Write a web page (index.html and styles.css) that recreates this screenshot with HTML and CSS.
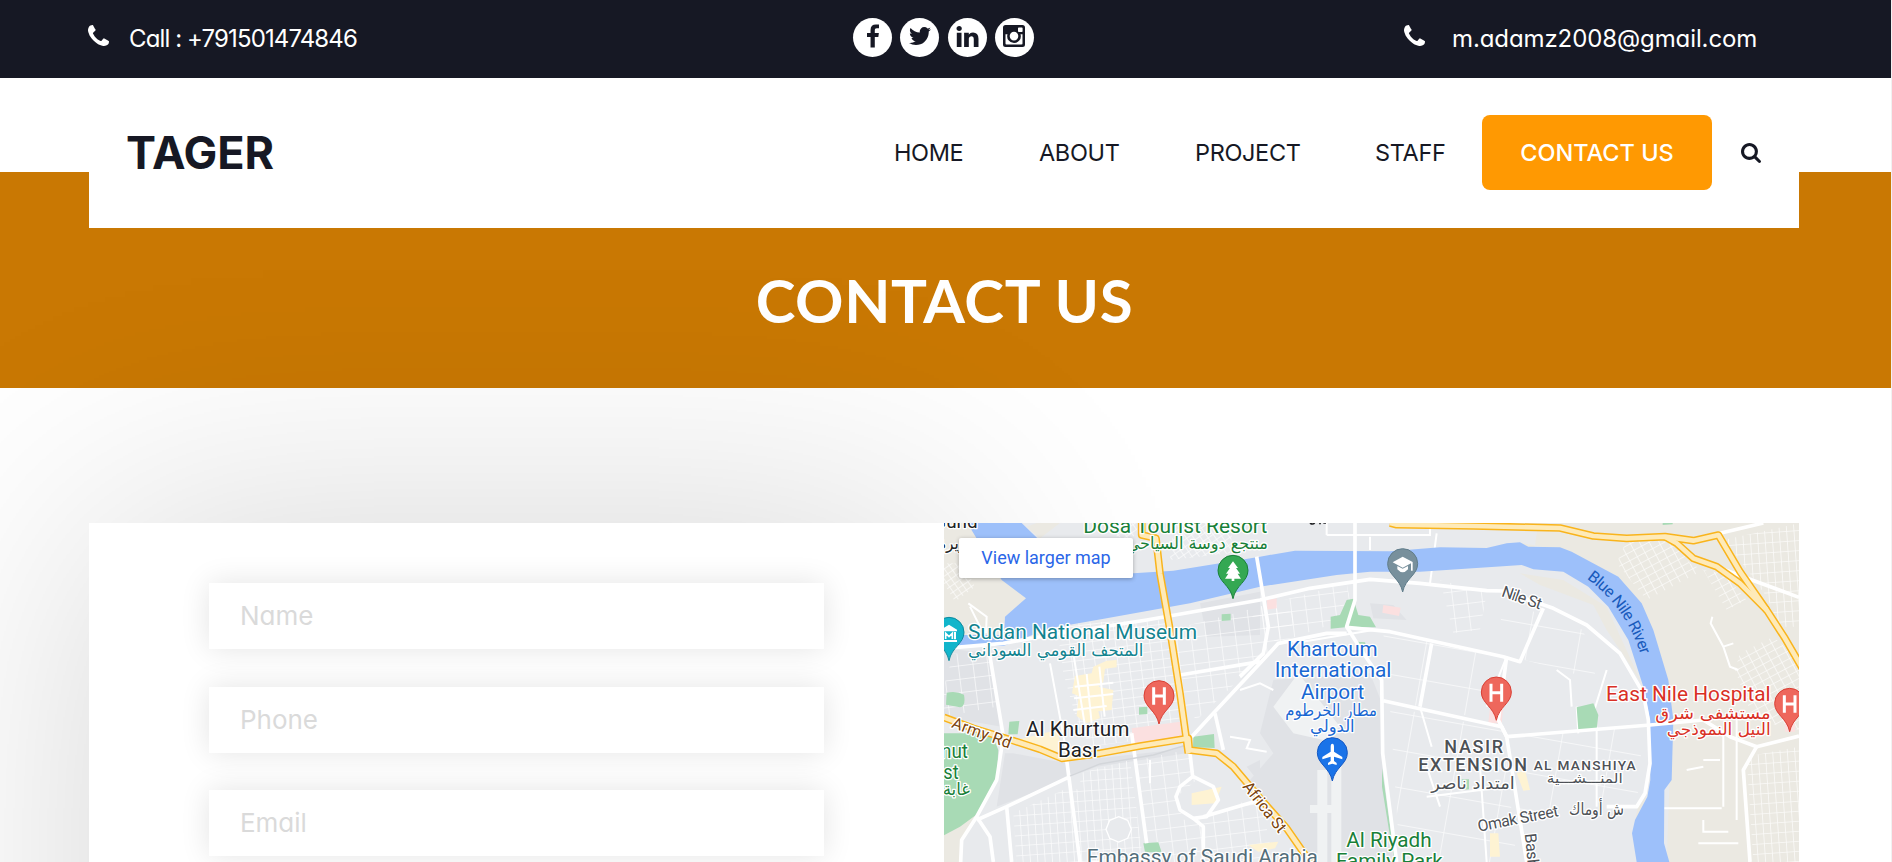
FILE: index.html
```
<!DOCTYPE html>
<html lang="en">
<head>
<meta charset="utf-8">
<title>Tager - Contact us</title>
<link rel="stylesheet" href="styles.css">
</head>
<body>
<svg class="defs" aria-hidden="true">
  <symbol id="phone" viewBox="0 128 1408 1408"><path d="M1408 1240q0 27-10 70.5t-21 68.5q-21 50-122 106-94 51-186 51-27 0-53-3.5t-57-12.5-47-14.5-55.5-20.5-49.5-18q-98-35-175-83-127-79-264-216t-216-264q-48-77-83-175-3-9-18-49.500t-20.500-55.500-14.500-47-12.500-57-3.500-53q0-92 51-186 56-101 106-122 25-11 68.500-21t70.500-10q14 0 21 3 18 6 53 76 11 19 30 54t35 63.500 31 53.500q3 4 17.500 25t21.500 35.500 7 28.500q0 20-28.500 50t-62 55-62 53-28.500 46q0 9 5 22.500t8.500 20.500 14 24 11.500 19q76 137 174 235t235 174q2 1 19 11.500t24 14 20.500 8.500 22.500 5q18 0 46-28.500t53-62 55-62 50-28.500q14 0 28.500 7t35.500 21.500 25 17.500q25 15 53.500 31t63.500 35 54 30q70 35 76 53 3 7 3 21z"/></symbol>
</svg>

<div class="topbar">
  <a class="contact call"><svg class="ico"><use href="#phone"/></svg><span class="t-call">Call : +791501474846</span></a>
  <div class="social">
    <a class="dot"><svg class="fb" viewBox="95 0 864 1664"><path d="M959 12v264h-157q-86 0-116 36t-30 108v189h293l-39 296h-254v759h-306v-759h-255v-296h255v-218q0-186 104-288.500t277-102.500q147 0 228 12z"/></svg></a>
    <a class="dot"><svg class="tw" viewBox="44 256 1576 1280"><path d="M1620 408q-67 98-162 167 1 14 1 42 0 130-38 259.500t-115.500 248.500-184.500 210.500-258 146-323 54.500q-271 0-496-145 35 4 78 4 225 0 401-138-105-2-188-64.500t-114-159.500q33 5 61 5 43 0 85-11-112-23-185.500-111.500t-73.500-205.500v-4q68 38 146 41-66-44-105-115t-39-154q0-88 44-163 121 149 294.500 238.500t371.500 99.500q-8-38-8-74 0-134 94.500-228.500t228.500-94.500q140 0 236 102 109-21 205-78-37 115-142 178 93-10 186-50z"/></svg></a>
    <a class="dot"><svg class="li" viewBox="0 148 1536 1468"><path d="M349 625v991h-330v-991h330zM370 319q1 73-50.500 122t-135.500 49h-2q-82 0-132-49t-50-122q0-74 51.500-122.500t134.500-48.500 133 48.500 51 122.500zM1536 1048v568h-329v-530q0-105-40.500-164.500t-126.500-59.500q-63 0-105.500 34.500t-63.500 85.500q-11 30-11 81v553h-329q2-399 2-647t-1-296l-1-48h329v144h-2q20-32 41-56t56.500-52 87-43.500 114.500-15.500q171 0 275 113.500t104 332.500z"/></svg></a>
    <a class="dot"><svg class="ig" viewBox="0 0 22 22"><path fill-rule="evenodd" d="M2.500 0h17A2.500 2.500 0 0 1 22 2.500v17a2.500 2.500 0 0 1-2.500 2.500h-17A2.500 2.500 0 0 1 0 19.500v-17A2.500 2.500 0 0 1 2.500 0zM15.800 2.500a.8.8 0 0 0-.8.8v3c0 .5.300.8.800.8h3a.8.8 0 0 0 .8-.8v-3a.8.800 0 0 0-.8-.8zM2.500 9.300v9.300c0 .5.400.9.900.9h15.200c.5 0 .9-.4.900-.9V9.300h-2a6.800 6.800 0 1 1-13 0zM11 6.800a4.300 4.300 0 1 0 0 8.600 4.300 4.300 0 0 0 0-8.600z"/></svg></a>
  </div>
  <a class="contact mail"><svg class="ico"><use href="#phone"/></svg><span class="t-mail">m.adamz2008@gmail.com</span></a>
</div>

<header class="header">
  <a class="brand">TAGER</a>
  <nav class="nav">
    <a class="link home">HOME</a>
    <a class="link about">ABOUT</a>
    <a class="link project">PROJECT</a>
    <a class="link staff">STAFF</a>
    <a class="button">CONTACT US</a>
    <svg class="search" viewBox="0 128 1664 1664"><path d="M1152 832q0-185-131.500-316.500t-316.500-131.500-316.500 131.500-131.500 316.500 131.500 316.500 316.500 131.500 316.500-131.500 131.500-316.500zM1664 1664q0 52-38 90t-90 38q-54 0-90-38l-343-342q-179 124-399 124-143 0-273.500-55.500t-225-150-150-225-55.500-273.500 55.500-273.500 150-225 225-150 273.500-55.500 273.500 55.500 225 150 150 225 55.500 273.500q0 220-124 399l343 343q37 37 37 90z"/></svg>
  </nav>
</header>

<section class="banner"><h1 class="title">CONTACT US</h1></section>

<section class="contact-area">
  <form class="form">
    <input class="field" type="text" placeholder="Name">
    <input class="field" type="text" placeholder="Phone">
    <input class="field" type="text" placeholder="Email">
  </form>
  <div class="map">
    <svg class="map-art" viewBox="12 9 2565 1017">
      <defs>
        <pattern id="g1" width="34" height="26" patternUnits="userSpaceOnUse" patternTransform="rotate(-7)"><path d="M0 0H34M0 0V26" class="street"/></pattern>
        <pattern id="g2" width="44" height="40" patternUnits="userSpaceOnUse" patternTransform="rotate(-7)"><path d="M0 0H44M0 0V40" class="street"/></pattern>
        <pattern id="g3" width="22" height="30" patternUnits="userSpaceOnUse" patternTransform="rotate(-4)"><path d="M0 0H22M0 0V30" class="street"/></pattern>
        <pattern id="g4" width="26" height="22" patternUnits="userSpaceOnUse" patternTransform="rotate(-28)"><path d="M0 0H26M0 0V22" class="street"/></pattern>
        <pattern id="g5" width="18" height="18" patternUnits="userSpaceOnUse" patternTransform="rotate(55)"><path d="M0 0H18M0 0V18" class="street"/></pattern>
        <pattern id="g6" width="150" height="110" patternUnits="userSpaceOnUse" patternTransform="rotate(10)"><path d="M0 0H150M0 0V110" class="street"/></pattern>
        <path id="pin" d="M0-130a45 45 0 0 1 45 45c0 34-37 44-45 85c-8-41-45-51-45-85a45 45 0 0 1 45-45z"/>
      </defs>
      <rect class="urban" x="0" y="0" width="2600" height="1030"/>
      <path class="urban2" d="M12 385L150 400L185 620L12 590zM780 250L960 215V345L800 350zM220 700L380 730 380 780 170 860 195 700zM380 725L700 690 740 670 740 700 470 740 390 770zM1000 480L1130 470 1290 460 1330 560 1330 700 1360 1026 1110 1026 930 780 1000 700 960 640zM920 740L960 720V790zM1290 250L1360 255 1400 300 1300 295z"/>
      <path class="apron" d="M1000 560L1075 460 1200 620 1150 660 1060 640zM1132 750h30v276h-30zM1174 690h30v336h-30zM1110 855h90v24h-90z"/>
      <path class="tan" d="M12 9H120L300 130 258 235 195 290 190 376H12zM290 9H360L300 55 260 20zM12 940L110 880 60 980 62 1026H12zM1795 9H2577V1026H2180L2195 600 2140 330 2035 170 1890 95 1740 68 1780 110zM1740 160L1870 180 2000 260 2110 500 2060 420 2000 330 1960 255 1800 195zM2122 828L2085 905 2076 960 2095 850z"/>
      <path class="hatch" fill="url(#g5)" d="M12 130L70 130 105 200 45 245 12 190zM520 9H600L575 60 530 50zM700 9L880 9 870 100 690 120z"/>
      <path class="hatch" fill="url(#g1)" d="M350 310L690 300 735 640 450 680 410 600 370 460z"/>
      <path class="hatch" fill="url(#g2)" d="M40 400L150 410 170 560 12 590 12 500zM690 330L1000 250 1080 290 980 400 770 600 735 560z"/>
      <path class="hatch" fill="url(#g3)" d="M220 880L390 800 520 850 560 1026 230 1026zM420 760L570 720 610 1026 430 1026z"/>
      <path class="hatch" fill="url(#g2)" d="M590 720L740 690 770 780 710 830 730 900 860 870 960 820 1000 1026 630 1026z"/>
      <path class="hatch" fill="url(#g2)" d="M920 270L1220 190 1240 290 1010 370zM1500 180L1640 220 1620 330 1540 340z"/>
      <path class="hatch" fill="url(#g6)" d="M1330 330L1700 420 1650 600 1340 540zM1350 560L1690 630 1730 1026 1380 1026zM1730 650L2110 620 2090 860 1740 880zM1660 230L1930 330 1970 480 1720 410z"/>
      <path class="hatch" fill="url(#g4)" d="M2060 60L2200 65 2250 130 2290 150 2120 240 2030 130zM2290 150L2350 160 2420 240 2360 270zM2400 400L2500 350 2577 420 2577 630 2440 600 2385 450z"/>
      <path class="hatch" fill="url(#g3)" d="M2350 60L2577 10 2577 320 2520 320 2480 230 2400 120zM2420 710L2577 680 2577 1026 2440 1026z"/>
      <path class="street2" d="M2317 290L2312 310 2350 380 2370 440 2395 450M2350 380l30-10M2350 640V860M2290 720h50M2165 865h180M2290 900v35h75M2275 970h120M2240 750l50-10M2390 600V900M85 250L140 290 138 340M140 360L90 260M1060 370L1300 330M900 510L960 490 1000 510M1470 190l20-150M1160 45h310v-25M1160 45V9M1290 50v40M1460 740L1500 860M2000 450l-40 130M1700 410L1640 560M1850 450L1890 480 1895 560M1910 560L1915 640M1970 620V860M1620 740L1640 1026M1460 830L1700 800M870 650l60 10-10 25 60 10M630 720V790"/>
      <path class="river" d="M82 9H245L300 62 345 150 580 160 700 152 960 110 1065 92 1350 94 1500 82 1640 84 1700 70 1740 67 1765 80 1860 82 1895 95 2035 170 2105 250 2140 330 2185 480 2200 600 2195 780 2173 810 2172 970 2188 1026H2090L2076 940 2085 900 2122 830 2131 780 2130 600 2110 500 2065 360 2005 260 1945 200 1870 155 1780 148 1745 135 1440 155 1290 155 1190 165 960 200 750 250 500 295 330 325 190 378H12V345H192L195 290 258 235 185 180z"/>
      <path class="park" d="M12 640L155 640 175 690 170 780 115 880 60 920 12 946zM20 518q30-6 52 6 6 36-12 38l-42-8zM208 605l30-2-5 40-28 0zM597 562l25-2v22l-25 2zM845 283l27-2v20l-27 2zM760 650l62-8 2 42-65-2zM610 970l45-3 10 30-50 0zM1172 290L1200 285 1220 240 1240 236 1255 285 1290 290 1308 322 1230 320 1172 326zM1250 365l25 2 5 15-25 0zM1326 745L1365 1026 1355 980 1326 800zM1910 562l50-12 15 35-5 42-55 3zM1565 778h22v30l-22 2zM2168 9h30v4l-30 2z"/>
      <path class="beach" d="M405 468l50-8 5-20 40-18 30-2v22l-35 4-5 40-15 14 45 10-5 60-40 4 5 20-40 16-30-22 6-60-20-8zM230 660L350 630 370 700zM755 820l90-20-20 50-70 5zM1730 760l25-10 15 60-20 2zM1650 940h25l5 70-30 0zM925 975l90-10-10 20-50 10z"/>
      <path class="rose" d="M575 625L720 605 725 648 580 675zM980 240l30-5v30l-28 4zM1330 255l52 8-5 25-50-10zM1650 560h40l-5 50-40 0zM2535 610h30v25h-30z"/>
      <path class="street2" d="M404 500L520 488M402 535L520 522M400 570L500 558M440 462L455 610M478 440L494 590"/>
      <g class="major">
        <path d="M12 385L190 370 330 345 620 300 960 240 1110 205 1290 178 1440 190 1640 212 1690 213L1840 265 1940 315 2040 400 2110 520 2125 600 2130 730 2115 820 2090 860 2000 860"/>
        <path d="M1245 9V240L1220 320 1270 400 1325 480 1328 700 1370 1026"/>
        <path d="M1220 322L1350 335 1690 410 1740 425 1810 265"/>
        <path d="M1220 340L1160 340 1015 370 960 430 820 580 755 650"/>
        <path d="M1330 542L1685 620 1700 650 2130 615 2290 600 2370 650 2450 680 2577 648"/>
        <path d="M2450 680L2410 750 2430 1026M1700 410L1675 600 1700 650 1760 1026M1475 370L1440 560"/>
        <path d="M150 410L190 650 170 780 110 890 65 960 62 1026M110 890L150 950 160 1026M110 900L200 860 390 770M380 720L420 1026M200 860L215 1026M575 640L620 970"/>
        <path d="M750 700L758 770 720 800 708 830 720 870 760 895 800 890 835 840 820 800 760 770M760 895L790 920 790 1026M790 890L960 840M720 465L960 425M825 580L850 690"/>
        <path d="M2330 140L2450 185 2577 232M2340 40L2470 9M950 110L985 320 970 400 900 470"/>
      </g>
      <path class="street2" d="M330 430L380 700M400 400L440 650M1440 560L1475 680"/>
      <path d="M390 768L480 732 640 705 740 675" fill="none" stroke="#d3d6da" stroke-width="4"/>
      <path d="M536 890l27 11 11 27-11 27-27 11-27-11-11-27 11-27z" class="ring"/>
      <g class="case"><path d="M605 9L605 45 648 55 660 160 690 330 720 520 745 700"/><path d="M12 592L100 625 220 662 300 688 365 715 480 700 600 678 745 655 748 690 830 700 880 740 960 835 1040 925 1110 1026"/><path d="M1350 9L1370 14 1600 18 1860 24 1960 48 2060 55 2175 50 2260 62 2335 45 2400 155 2480 270 2535 355 2590 450"/><path d="M2175 50L2210 70 2260 115 2330 140 2400 190 2480 270"/></g>
      <g class="fill"><path d="M605 0L605 45 648 55 660 160 690 330 720 520 745 700"/><path d="M0 588L100 625 220 662 300 688 365 715 480 700 600 678 745 655 748 690 830 700 880 740 960 835 1040 925 1120 1040"/><path d="M1350 9L1370 14 1600 18 1860 24 1960 48 2060 55 2175 50 2260 62 2335 45 2400 155 2480 270 2535 355 2590 450"/><path d="M2175 50L2210 70 2260 115 2330 140 2400 190 2480 270"/></g>

      <use href="#pin" x="27" y="422" fill="#12b5cb" stroke="#0e8a9e" stroke-width="3"/>
      <path class="w" d="M27 314l24 15v5H3v-5zM6 336h6v22H6zM42 336h6v22h-6zM2 360h49v6H2z"/><path d="M17 357v-17l10 10 10-10v17" fill="none" stroke="#fff" stroke-width="5"/>
      <use href="#pin" x="879" y="236" fill="#34a853" stroke="#188038" stroke-width="3"/>
      <path class="w" d="M879 124l15 20h-6l12 17h-7l10 15h-20v7h-8v-7h-20l10-15h-7l12-17h-6z"/>
      <use href="#pin" x="1388" y="216" fill="#78909c" stroke="#607d8b" stroke-width="3"/>
      <path class="w" d="M1388 110l30 16v26h-5v-22l-25 13-30-16zM1372 138l16 8 16-8v10q-8 9-16 9t-16-9z"/>
      <g fill="#ee675c" stroke="#d93f34" stroke-width="3"><use href="#pin" x="657" y="612"/><use href="#pin" x="1669" y="601"/><use href="#pin" x="2549" y="635"/></g>
      <path d="M641 502v52M673 502v52M641 528h32M1653 491v54M1685 491v54M1653 518h32M2533 526v52M2565 526v52M2533 552h32" stroke="#fff" stroke-width="9" fill="none"/>
      <use href="#pin" x="1177" y="783" fill="#1a73e8" stroke="#1559c4" stroke-width="3"/>
      <path class="w" d="M1177 671q5 0 5 9v15l25 16v7l-25-8v13l8 6v6l-13-4-13 4v-6l8-6v-13l-25 8v-7l25-16v-15q0-9 5-9z"/>

      <g class="label">
        <text x="-20" y="23" textLength="133" lengthAdjust="spacingAndGlyphs">Gund</text><text x="-6" y="88" class="ar" textLength="85" lengthAdjust="spacingAndGlyphs">زيرة</text>
        <g class="green"><text x="430" y="38" textLength="552" lengthAdjust="spacingAndGlyphs">Dosa Tourist Resort</text><text x="560" y="88" class="ar" textLength="424" lengthAdjust="spacingAndGlyphs">منتجع دوسة السياحي</text>
          <text x="3" y="713" textLength="81" lengthAdjust="spacingAndGlyphs">nut</text><text x="10" y="777" textLength="46" lengthAdjust="spacingAndGlyphs">st</text><text x="8" y="824" class="ar" textLength="82" lengthAdjust="spacingAndGlyphs">غابة</text>
          <text x="1219" y="982" textLength="256" lengthAdjust="spacingAndGlyphs">Al Riyadh</text><text x="1188" y="1045" textLength="320" lengthAdjust="spacingAndGlyphs">Family Park</text></g>
        <g class="teal"><text x="84" y="357" textLength="687" lengthAdjust="spacingAndGlyphs">Sudan National Museum</text><text x="84" y="407" class="ar" textLength="526" lengthAdjust="spacingAndGlyphs">المتحف القومي السوداني</text></g>
        <text x="258" y="648" textLength="310" lengthAdjust="spacingAndGlyphs">Al Khurtum</text><text x="354" y="711" textLength="124" lengthAdjust="spacingAndGlyphs">Basr</text>
        <g class="blue"><text x="1041" y="409" textLength="272" lengthAdjust="spacingAndGlyphs">Khartoum</text><text x="1004" y="472" textLength="350" lengthAdjust="spacingAndGlyphs">International</text><text x="1083" y="536" textLength="190" lengthAdjust="spacingAndGlyphs">Airport</text><text x="1036" y="587" class="ar" textLength="275" lengthAdjust="spacingAndGlyphs">مطار الخرطوم</text><text x="1110" y="637" class="ar" textLength="134" lengthAdjust="spacingAndGlyphs">الدولي</text></g>
        <g class="red"><text x="1998" y="543" textLength="494" lengthAdjust="spacingAndGlyphs">East Nile Hospital</text><text x="2146" y="596" class="ar" textLength="346" lengthAdjust="spacingAndGlyphs">مستشفى شرق</text><text x="2180" y="644" class="ar" textLength="312" lengthAdjust="spacingAndGlyphs">النيل النموذجي</text></g>
        <g class="gray"><text x="1513" y="699" class="mid" textLength="176">NASIR</text><text x="1435" y="753" class="mid" textLength="326">EXTENSION</text><text x="1474" y="807" class="ar" textLength="250" lengthAdjust="spacingAndGlyphs">امتداد ناصر</text><text x="1781" y="749" class="sm" textLength="306">AL MANSHIYA</text><text x="1820" y="790" class="ar3" textLength="228" lengthAdjust="spacingAndGlyphs">المنـــشـــية</text>
          <text x="1887" y="885" class="ar" textLength="165" lengthAdjust="spacingAndGlyphs">ش أوماك</text><text class="road" transform="translate(1616 935) rotate(-11)" textLength="246">Omak Street</text><text class="road" transform="translate(1682 228) rotate(19)" textLength="124">Nile St</text><text class="road" transform="translate(1754 942) rotate(84)" textLength="130">Bashir</text></g>
        <text x="440" y="1031" class="slate" textLength="694" lengthAdjust="spacingAndGlyphs">Embassy of Saudi Arabia</text>
        <g class="brown"><text class="road" transform="translate(32 622) rotate(20)" textLength="186">Army Rd</text><text class="road" transform="translate(906 800) rotate(52)" textLength="180">Africa St</text></g>
        <path id="nile" class="guide" d="M1940 176Q2060 262 2104 412"/><text class="road plain"><textPath href="#nile" textLength="285">Blue Nile River</textPath></text>
        <path d="M1110 9q8 6 14 0M1140 9v4M1150 9h8" stroke="#202124" stroke-width="5" fill="none"/>
      </g>
    </svg>
    <a class="larger">View larger map</a>
  </div>
</section>
</body>
</html>
```
FILE: styles.css
```
* { box-sizing: border-box; }
html { height: 862px; overflow: hidden; background: #f1f1f1; }
body { margin: 0; width: 1891px; height: 862px; overflow: hidden; background: #fff; color: #161824; font-family: Inter, "Open Sans", sans-serif; font-feature-settings: "cv11"; }
.defs { position: absolute; width: 0; height: 0; }

.topbar { height: 78px; padding: 0 134px 3px 88px; background: #161824; color: #fff; display: flex; justify-content: space-between; align-items: center; font-size: 24px; }
.contact { display: flex; align-items: center; white-space: nowrap; width: 353px; }
.call { width: 765px; }
.ico { width: 21px; height: 21px; flex: none; fill: #fff; margin-top: -4px; }
.t-call { margin: 1px 0 0 20px; letter-spacing: -0.88px; }
.t-mail { margin: 1px 0 0 27px; letter-spacing: -0.1px; }
.social { display: flex; gap: 8.3px; margin-right: auto; }
.dot { width: 39px; height: 39px; border-radius: 50%; background: #fff; fill: #161824; display: flex; align-items: center; justify-content: center; padding-bottom: 3px; }
.fb { width: 12px; height: 24px; }
.tw { width: 22px; height: 18px; }
.li { width: 23px; height: 21px; }
.ig { width: 22px; height: 22px; }

.header { position: relative; z-index: 2; width: 1710px; height: 150px; margin-left: 89px; padding: 0 38px 2px 37px; background: #fff; display: flex; align-items: center; justify-content: space-between; }
.brand { font-size: 45px; font-weight: 700; letter-spacing: -0.1px; }
.nav { display: flex; align-items: center; font-size: 23.5px; letter-spacing: -0.35px; white-space: nowrap; }
.home { width: 145px; }
.about { width: 156px; }
.project { width: 180px; }
.staff { width: 107px; }
.button { width: 230px; height: 75px; border-radius: 8px; background: #ff9902; color: #fff; font-weight: 500; letter-spacing: 0; display: flex; align-items: center; justify-content: center; }
.search { width: 20px; height: 20px; margin: 2px 0 0 29px; fill: #161824; }

.banner { height: 216px; margin-top: -56px; padding-top: 56px; background: #c97803; display: flex; align-items: center; justify-content: center; }
.title { margin: 0 0 16px -2px; color: #fff; font: 700 60px/72px Lato, sans-serif; letter-spacing: 0.6px; }

.contact-area { height: 474px; padding: 135px 92px 0 89px; display: grid; grid-template-columns: 855px 855px; }
.form { height: 760px; padding: 60px 120px; background: #fff; box-shadow: 0 0 250px rgba(0, 0, 0, 0.165); display: flex; flex-direction: column; gap: 37.6px; }
.field { width: 615px; height: 66px; flex: none; padding: 0 31px 1px; border: 0; background: #fff; box-shadow: 0 0 30px rgba(0, 0, 0, 0.11); font: inherit; font-size: 26px; letter-spacing: -0.05px; }
.field::placeholder { color: #dadada; }
.map { position: relative; z-index: 1; height: 339px; overflow: hidden; }
.map-art { display: block; width: 855px; height: 339px; }
.larger { position: absolute; left: 15px; top: 15px; width: 174px; height: 40px; border-radius: 2px; background: #fff; box-shadow: 0 1px 4px rgba(0, 0, 0, 0.3); color: #2a66e8; font: 18px/39px Roboto, sans-serif; text-align: center; }

.urban { fill: #e8eaed; }
.urban2 { fill: #e0e2e6; }
.apron { fill: #f0f2f3; }
.tan { fill: #ebe9e2; }
.river { fill: #9dc0fa; }
.park { fill: #a8dab5; }
.beach { fill: #fef3d3; }
.rose { fill: #fbe0e0; }
.street { fill: none; stroke: #fff; stroke-width: 4.5; }
.hatch { opacity: 0.8; }
.street2 { fill: none; stroke: #fff; stroke-width: 6; }
.major { fill: none; stroke: #fff; stroke-width: 11; stroke-linejoin: round; }
.ring { fill: #e8eaed; stroke: #fff; stroke-width: 4; }
.case { fill: none; stroke: #f9b41c; stroke-width: 23; stroke-linejoin: round; }
.fill { fill: none; stroke: #feeab8; stroke-width: 14; stroke-linejoin: round; }
.w { fill: #fff; }
.guide { fill: none; stroke: none; }

.label { font-family: Roboto, "Noto Sans", "DejaVu Sans", sans-serif; font-size: 61px; fill: #202124; stroke: #fff; stroke-width: 8; stroke-linejoin: round; }
.label text { paint-order: stroke; }
.label .green { fill: #188038; }
.label .teal { fill: #12838f; }
.label .blue { fill: #1967d2; }
.label .red { fill: #d93025; }
.label .gray { fill: #4d5156; }
.label .slate { fill: #546e7a; }
.label .brown { fill: #7a420b; }
.label .ar { font-size: 50px; font-family: "DejaVu Sans", sans-serif; }
.label .ar3 { font-size: 40px; font-family: "DejaVu Sans", sans-serif; }
.label .mid { font-size: 54px; font-weight: 500; }
.label .sm { font-size: 41px; font-weight: 500; }
.label .road { font-size: 48px; }
.label .plain { fill: #185abc; stroke: none; }
```
